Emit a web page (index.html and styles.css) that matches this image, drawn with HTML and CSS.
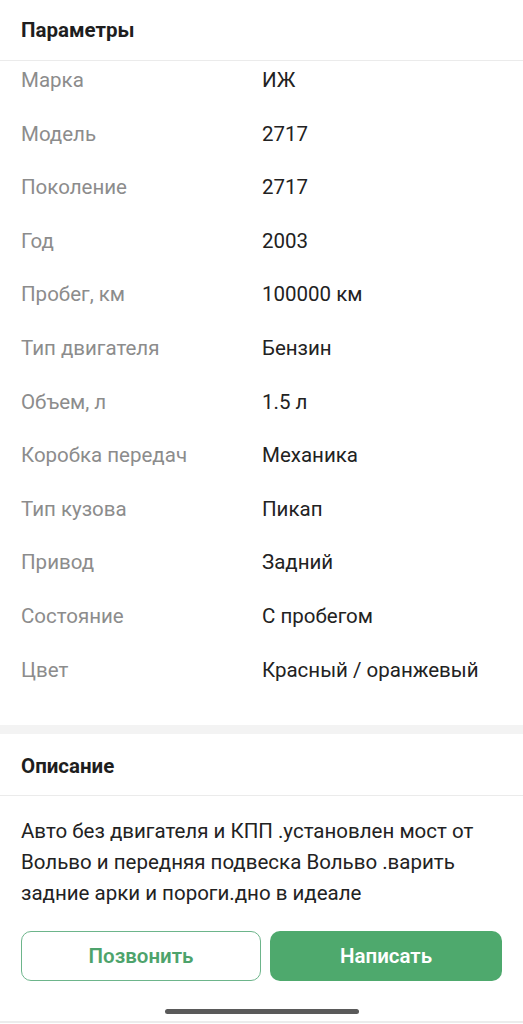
FILE: index.html
```html
<!DOCTYPE html>
<html lang="ru">
<head>
<meta charset="utf-8">
<link rel="stylesheet" href="styles.css">
</head>
<body>
<div class="page">
  <section class="section">
    <div class="section-head">Параметры</div>
    <div class="params">
      <div class="row"><span class="label">Марка</span><span class="value">ИЖ</span></div>
      <div class="row"><span class="label">Модель</span><span class="value">2717</span></div>
      <div class="row"><span class="label">Поколение</span><span class="value">2717</span></div>
      <div class="row"><span class="label">Год</span><span class="value">2003</span></div>
      <div class="row"><span class="label">Пробег, км</span><span class="value">100000 км</span></div>
      <div class="row"><span class="label">Тип двигателя</span><span class="value">Бензин</span></div>
      <div class="row"><span class="label">Объем, л</span><span class="value">1.5 л</span></div>
      <div class="row"><span class="label">Коробка передач</span><span class="value">Механика</span></div>
      <div class="row"><span class="label">Тип кузова</span><span class="value">Пикап</span></div>
      <div class="row"><span class="label">Привод</span><span class="value">Задний</span></div>
      <div class="row"><span class="label">Состояние</span><span class="value">С пробегом</span></div>
      <div class="row"><span class="label">Цвет</span><span class="value">Красный / оранжевый</span></div>
    </div>
  </section>
  <div class="band"></div>
  <section class="section">
    <div class="section-head desc-head">Описание</div>
    <p class="desc">Авто без двигателя и КПП .установлен мост от Вольво и передняя подвеска Вольво .варить задние арки и пороги.дно в идеале</p>
  </section>
  <div class="actions">
    <button class="btn btn-outline">Позвонить</button>
    <button class="btn btn-fill">Написать</button>
  </div>
  <div class="home-bar"><span class="indicator"></span></div>
</div>
</body>
</html>
```
FILE: styles.css
```css
* { box-sizing: border-box; }
html, body { margin: 0; padding: 0; background: #fff; }
body {
  font-family: Roboto, "Noto Sans", "Liberation Sans", sans-serif;
  color: #222;
  width: 523px;
  height: 1024px;
  overflow: hidden;
}
.page { display: flex; flex-direction: column; }
.section-head {
  height: 61px;
  padding: 0 21px;
  display: flex;
  align-items: center;
  font-size: 20.5px;
  font-weight: 700;
  color: #1e1e1e;
  border-bottom: 1px solid #ebebeb;
}
.params {
  display: flex;
  flex-direction: column;
  gap: 29.6px;
  padding: 7px 21px 43px;
}
.row {
  display: grid;
  grid-template-columns: 241px 1fr;
  line-height: 24px;
  font-size: 20.5px;
}
.label { color: #8c8c8c; }
.value { color: #222; }
.band { height: 9px; background: #f3f3f3; }
.desc-head { height: 62px; padding-top: 4px; }
.desc {
  margin: 0;
  padding: 20px 21px 0;
  font-size: 20.5px;
  line-height: 31px;
  color: #222;
}
.actions {
  display: flex;
  gap: 9px;
  padding: 22px 21px 0;
}
.btn {
  height: 50px;
  border-radius: 10px;
  font-family: inherit;
  font-size: 20.5px;
  font-weight: 600;
  cursor: pointer;
}
.btn-outline {
  width: 240px;
  background: #fff;
  border: 1.5px solid #6db58b;
  color: #4da36c;
}
.btn-fill {
  flex: 1;
  background: #4ea96d;
  border: none;
  color: #fff;
}
.home-bar {
  height: 42px;
  display: flex;
  justify-content: center;
  align-items: flex-start;
  padding-top: 28px;
  border-bottom: 2px solid #ececec;
}
.indicator {
  width: 194px;
  height: 5px;
  border-radius: 3px;
  background: #5a5a5a;
}
```
